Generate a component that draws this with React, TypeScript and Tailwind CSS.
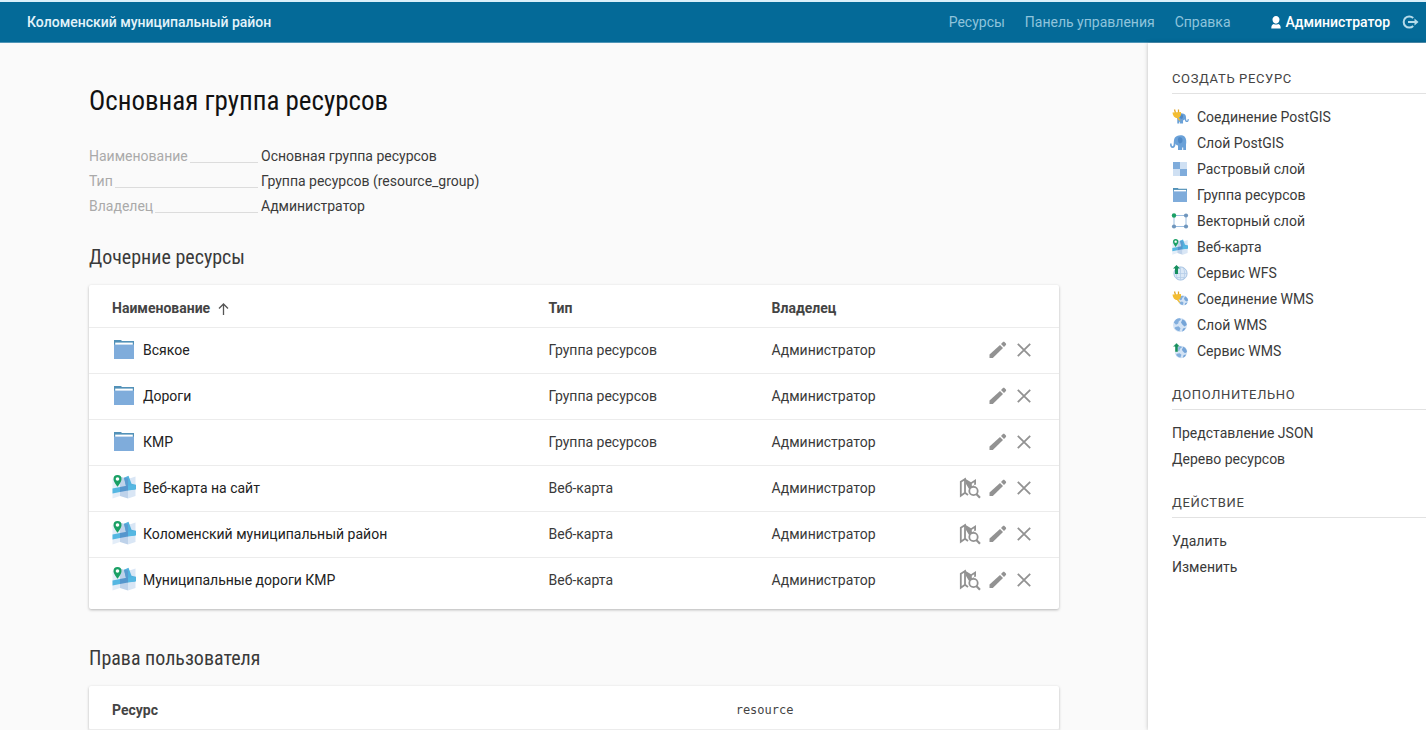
import type { ReactNode } from 'react';

const condensed = "font-['Roboto_Condensed','Liberation_Sans_Narrow',sans-serif]";

function FolderIcon({ className }: { className: string }) {
  return (
    <svg viewBox="0 0 20 19" className={className} preserveAspectRatio="none" aria-hidden="true">
      <path d="M0 0h7l1 1h12v18H0z" fill="#5291b8" />
      <path d="M1.200 2.600h17.600v3H1.200z" fill="#fff" />
      <path d="M0 4.600h20V19H0z" fill="#7facdb" />
    </svg>
  );
}

function WebMapIcon({ className }: { className: string }) {
  return (
    <svg viewBox="0 0 24 24" className={className} aria-hidden="true">
      <path d="M0.500 4L8 1.500V21L0.500 23.500z" fill="#e3edf8" />
      <path d="M8 1.500L16 4v19.500L8 21z" fill="#bed2ea" />
      <path d="M16 4l7.500-2.500V21L16 23.500z" fill="#d9e6f5" />
      <path d="M12 2.800L16.500 0.800l3 8 4.500 1v4.500l-9 1z" fill="#52b1de" />
      <path d="M12 2.800L16 3.600v8l-1.500 1.500z" fill="#5a9bd0" />
      <path d="M0.500 13.500L8 12v5L0.500 18.500z" fill="#55b7e2" />
      <path d="M8 12l8-1.500v5L8 17z" fill="#5596cd" />
      <path d="M16 10.500l7.500-.5v4.500L16 15.500z" fill="#55b7e2" />
      <path d="M5.500 0a4 4 0 0 0-4 4c0 3 4 7.800 4 7.800S9.500 7 9.500 4a4 4 0 0 0-4-4z" fill="#1aa065" />
      <circle cx="5.500" cy="4" r="1.800" fill="#fff" />
    </svg>
  );
}

function Plug() {
  return (
    <g>
      <path d="M2.500 0.500l1 3.500M6.500 0.500v3.500" stroke="#e0a62a" strokeWidth="1.300" />
      <path d="M0.500 3.500L9 3c.5 3-.5 5-2.500 5.700l2 2.500-1.300.6-2.300-2.800C2.500 9 .8 6.500.5 3.500z" fill="#f3bd32" />
    </g>
  );
}

function Elephant() {
  return (
    <g>
      <path
        d="M7 1C9 0 13 0 14.500 1.500 16.500 3.500 16.500 7 16 9.500V15h-2.800v-2.500h-1V15H8v-4.500C6.500 10.500 6 9.500 5.700 8.500 5.500 11 4.500 13 2.700 13 .8 13-.3 11 .1 8.500h1.500c0 1.500.2 2.700 1.100 2.700C4 11 3.600 7.500 4 5c.3-2 1.300-3.300 3-4z"
        fill="#6aa1d8"
      />
      <path d="M8.500 2.500c2.500-.8 4.500 1 4 3.500-.3 1.500-1.500 2.500-3 2.500C8 7.500 7.500 4.500 8.500 2.500z" fill="#5089c6" />
    </g>
  );
}

function Globe({ cx, cy, r }: { cx: number; cy: number; r: number }) {
  return (
    <g transform={`translate(${cx} ${cy}) scale(${r / 7})`}>
      <circle r="7" fill="#d3e3f5" />
      <path d="M-6.200-2.500C-5-5.500-2.500-7 0-6.800l1 1.600-2.200 1.500-.6 2.200-2.200 1.300z" fill="#82aedd" />
      <path d="M2.500-5.800C5-4.800 6.500-2.500 6.800 0L4.500 1.500 2.300-.5 1-2.500z" fill="#76a5d8" />
      <path d="M-4.500 2l3-.7L.5 3.200-.6 6.200C-3 6-4.800 4.500-5.500 3z" fill="#82aedd" />
      <path d="M3 3.500l2.800-.7C5 4.800 3.800 6 2 6.500z" fill="#76a5d8" />
    </g>
  );
}

const smallSvg = 'h-4 w-4 overflow-visible';

const createItems: { label: string; icon: ReactNode }[] = [
  {
    label: 'Соединение PostGIS',
    icon: (
      <svg viewBox="0 0 16 16" className={smallSvg} aria-hidden="true">
        <g transform="translate(16.800 4) scale(-0.720 0.700)">
          <Elephant />
        </g>
        <Plug />
      </svg>
    ),
  },
  {
    label: 'Слой PostGIS',
    icon: (
      <svg viewBox="2 0 16 16" className={smallSvg} aria-hidden="true">
        <Elephant />
      </svg>
    ),
  },
  {
    label: 'Растровый слой',
    icon: (
      <svg viewBox="0 0 16 16" className={smallSvg} aria-hidden="true">
        <path d="M1 1h14v14H1z" fill="#cfe0f3" />
        <path d="M1 1h7v7H1zM8 8h7v7H8z" fill="#7facdb" />
      </svg>
    ),
  },
  { label: 'Группа ресурсов', icon: <FolderIcon className="h-3.5 w-3.5" /> },
  {
    label: 'Векторный слой',
    icon: (
      <svg viewBox="0 0 16 16" className={smallSvg} aria-hidden="true">
        <path d="M2 2.500h12v11H2z" fill="none" stroke="#9dbfe2" strokeWidth="1" />
        <circle cx="2" cy="2.500" r="2.200" fill="#1aa065" />
        <circle cx="14" cy="2.500" r="2.100" fill="#7096bd" />
        <circle cx="2" cy="13.500" r="2.100" fill="#7096bd" />
        <circle cx="14" cy="13.500" r="2.100" fill="#7096bd" />
      </svg>
    ),
  },
  { label: 'Веб-карта', icon: <WebMapIcon className="h-4 w-4" /> },
  {
    label: 'Сервис WFS',
    icon: (
      <svg viewBox="0 0 16 16" className={smallSvg} aria-hidden="true">
        <circle cx="8.500" cy="8.500" r="6.600" fill="#dbe8f6" stroke="#a9c5e4" strokeWidth="1" />
        <path d="M3 12.500h11M2.500 8.500h12.500M8.500 2v13M5.500 3c-1.500 3.500-1.500 8 0 11.500M11.500 3c1.500 3.500 1.500 8 0 11.500" fill="none" stroke="#b5cde8" strokeWidth="0.800" />
        <path d="M4.500 0L8 3.500H6V9H3V3.500H1z" fill="#168f5e" />
      </svg>
    ),
  },
  {
    label: 'Соединение WMS',
    icon: (
      <svg viewBox="0 0 16 16" className={smallSvg} aria-hidden="true">
        <Globe cx={11.2} cy={9.5} r={5} />
        <Plug />
      </svg>
    ),
  },
  {
    label: 'Слой WMS',
    icon: (
      <svg viewBox="0 0 16 16" className={smallSvg} aria-hidden="true">
        <Globe cx={8} cy={8} r={7} />
      </svg>
    ),
  },
  {
    label: 'Сервис WMS',
    icon: (
      <svg viewBox="0 0 16 16" className={smallSvg} aria-hidden="true">
        <Globe cx={9} cy={9} r={6.2} />
        <path d="M4.500 0L8.200 3.700H6V9H3V3.700H.8z" fill="#168f5e" stroke="#fff" strokeWidth="0.400" />
      </svg>
    ),
  },
];

const extraItems = ['Представление JSON', 'Дерево ресурсов'];
const actionItems = ['Удалить', 'Изменить'];

const rows = [
  { name: 'Всякое', map: false },
  { name: 'Дороги', map: false },
  { name: 'КМР', map: false },
  { name: 'Веб-карта на сайт', map: true },
  { name: 'Коломенский муниципальный район', map: true },
  { name: 'Муниципальные дороги КМР', map: true },
];

const meta = [
  ['Наименование', 'Основная группа ресурсов'],
  ['Тип', 'Группа ресурсов (resource_group)'],
  ['Владелец', 'Администратор'],
];

function MapSearchIcon() {
  return (
    <svg viewBox="0 0 22 22" className="h-[22px] w-[22px]" fill="none" stroke="#929292" strokeWidth="1.800" aria-hidden="true">
      <path d="M1.800 4.800L6 2.200v13.600l-4.200 3z" />
      <path d="M5.500 1.300l6.500 3.900L17 2v5.500l-2 .8-4.500 4.500L7 7z" fill="#929292" stroke="none" />
      <path d="M12.800 6.800L15.200 5.300v2.700l-2.400 1.200z" fill="#fff" stroke="none" />
      <path d="M6 15.800l3 2.200" />
      <circle cx="14.500" cy="14" r="4.200" fill="#fff" />
      <path d="M17.300 17l3.700 3.700" strokeWidth="2.200" />
    </svg>
  );
}

function PencilIcon() {
  return (
    <svg viewBox="0 0 18 18" className="h-[18px] w-[18px]" fill="#929292" aria-hidden="true">
      <path d="M0.500 13.500L11 4l3 3L3.800 17H0.500z" />
      <path d="M12 3l1.700-1.700c.6-.6 1.400-.6 2 0l1 1c.6.600.6 1.400 0 2L15 6z" />
    </svg>
  );
}

function CrossIcon() {
  return (
    <svg viewBox="0 0 14 14" className="h-3.5 w-3.5" stroke="#929292" strokeWidth="1.800" aria-hidden="true">
      <path d="M0.800 0.800l12.400 12.400M13.200 0.800L0.800 13.200" />
    </svg>
  );
}

function SideSection({ title, children }: { title: string; children: ReactNode }) {
  return (
    <section className="mb-[21px]">
      <h2 className="mb-2.5 border-b border-[#e2e2e2] pb-1 text-[13px] leading-5 tracking-wider text-[#444] uppercase">{title}</h2>
      <ul>{children}</ul>
    </section>
  );
}

export default function App() {
  return (
    <div className="flex min-h-screen flex-col bg-[#fafafa] font-[Roboto,sans-serif] text-[14px] text-[#3a3a3a]">
      <header className="flex h-[43px] shrink-0 items-center border-t-2 border-b border-t-[#daf0fa] border-b-[#4f95b7] bg-[#046a98] pr-[7px] pl-[27px]">
        <a href="#home" className="font-medium text-[#e3f3fa]">Коломенский муниципальный район</a>
        <nav className="ml-auto flex items-center gap-5 text-[#8fc4dc]">
          <a href="#resources">Ресурсы</a>
          <a href="#control">Панель управления</a>
          <a href="#help">Справка</a>
        </nav>
        <a href="#user" className="ml-10 flex items-center gap-[5px] font-medium text-white">
          <svg viewBox="0 0 10 13" className="h-[13px] w-2.5" fill="currentColor" aria-hidden="true">
            <path d="M5 0a3.500 3.500 0 0 1 3.500 3.800C8.400 6 7 7.700 5 7.700S1.600 6 1.500 3.800A3.500 3.500 0 0 1 5 0zM.3 12.500C.2 9.800 1.200 8.300 2.800 8c1.400.8 3 .8 4.400 0 1.600.3 2.600 1.800 2.500 4.500z" />
          </svg>
          Администратор
        </a>
        <button type="button" aria-label="Выйти" className="ml-3 text-[#b5dbea]">
          <svg viewBox="0 0 17 14" className="h-3.5 w-[17px]" fill="none" stroke="currentColor" strokeWidth="2" aria-hidden="true">
            <path d="M11.200 3A5.600 5.600 0 1 0 11.200 11" />
            <path d="M6 7h7.500" />
            <path d="M12.500 3.500L16.500 7l-4 3.500z" fill="currentColor" stroke="none" />
          </svg>
        </button>
      </header>

      <div className="flex flex-1">
        <main className="min-w-0 flex-1 px-[89px] pt-10">
          <h1 className={`${condensed} text-[27px] leading-9 text-[#111]`}>Основная группа ресурсов</h1>

          <dl className="mt-[25px]">
            {meta.map(([term, value]) => (
              <div key={term} className="flex h-[25px] items-center">
                <dt className="flex w-[169px] items-baseline gap-0.5 text-[#aaa]">
                  {term}
                  <span className="h-px flex-1 translate-y-0.5 bg-[#dcdcdc]" />
                </dt>
                <dd className="ml-[3px]">{value}</dd>
              </div>
            ))}
          </dl>

          <h2 className={`${condensed} mt-6 mb-3.5 text-[20px] leading-7`}>Дочерние ресурсы</h2>
          <div className="rounded-xs bg-white pb-1.5 shadow-[0_1px_3px_rgba(0,0,0,0.28)]">
            <table className="w-full table-fixed border-collapse text-left">
              <thead>
                <tr className="h-[42px] text-[#444]">
                  <th className="w-[45%] pt-1.5 pl-[23px] font-bold">
                    <span className="flex items-center gap-2">
                      Наименование
                      <svg viewBox="0 0 11 12" className="h-3 w-[11px]" fill="none" stroke="#555" strokeWidth="1.300" aria-hidden="true">
                        <path d="M5.500 12V1M1 5.500L5.500 1 10 5.500" />
                      </svg>
                    </span>
                  </th>
                  <th className="w-[23%] pt-1.5 pl-[23px] font-bold">Тип</th>
                  <th className="w-[16%] pt-1.5 pl-[23px] font-bold">Владелец</th>
                  <th className="w-[16%]" aria-label="Действия" />
                </tr>
              </thead>
              <tbody>
                {rows.map((row) => (
                  <tr key={row.name} className="h-[46px] border-t border-[#ececec]">
                    <td className="pl-[23px]">
                      <a href="#item" className="flex items-center gap-[7px] text-[#222]">
                        <span className="flex w-6 justify-center pb-0.5">
                          {row.map ? <WebMapIcon className="h-6 w-6" /> : <FolderIcon className="h-[19px] w-5" />}
                        </span>
                        {row.name}
                      </a>
                    </td>
                    <td className="pl-[23px]">{row.map ? 'Веб-карта' : 'Группа ресурсов'}</td>
                    <td className="pl-[23px]">Администратор</td>
                    <td className="pr-7">
                      <div className="flex items-center justify-end gap-2">
                        {row.map && (
                          <a href="#map" aria-label="Открыть карту">
                            <MapSearchIcon />
                          </a>
                        )}
                        <a href="#edit" aria-label="Изменить">
                          <PencilIcon />
                        </a>
                        <button type="button" aria-label="Удалить" className="ml-0.5">
                          <CrossIcon />
                        </button>
                      </div>
                    </td>
                  </tr>
                ))}
              </tbody>
            </table>
          </div>

          <h2 className={`${condensed} mt-[35px] mb-3.5 text-[20px] leading-7`}>Права пользователя</h2>
          <div className="rounded-xs bg-white shadow-[0_1px_3px_rgba(0,0,0,0.28)]">
            <table className="w-full table-fixed border-collapse text-left">
              <thead>
                <tr className="h-[43px] border-b border-[#ececec] text-[#444]">
                  <th className="w-2/3 pt-1.5 pl-[23px] font-bold">Ресурс</th>
                  <th className="pt-1.5 font-['DejaVu_Sans_Mono',monospace] text-[12px] font-normal">resource</th>
                </tr>
              </thead>
            </table>
          </div>
        </main>

        <aside className="w-[278px] shrink-0 bg-white pt-[26px] pl-6 shadow-[0_0_4px_rgba(0,0,0,0.25)]">
          <SideSection title="Создать ресурс">
            {createItems.map((item) => (
              <li key={item.label}>
                <a href="#create" className="flex h-[26px] items-center gap-[9px]">
                  <span className="flex w-4 justify-center">{item.icon}</span>
                  {item.label}
                </a>
              </li>
            ))}
          </SideSection>
          <SideSection title="Дополнительно">
            {extraItems.map((label) => (
              <li key={label}>
                <a href="#extra" className="flex h-[26px] items-center">{label}</a>
              </li>
            ))}
          </SideSection>
          <SideSection title="Действие">
            {actionItems.map((label) => (
              <li key={label}>
                <a href="#action" className="flex h-[26px] items-center">{label}</a>
              </li>
            ))}
          </SideSection>
        </aside>
      </div>
    </div>
  );
}
